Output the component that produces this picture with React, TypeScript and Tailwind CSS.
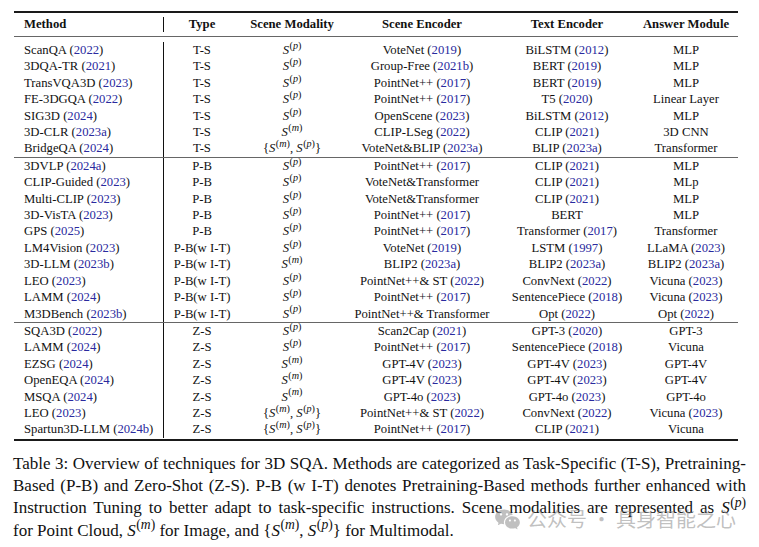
import { RiWechatFill } from 'react-icons/ri';

type Mod = 'p' | 'm' | 'mp';
type Row = [string, string, Mod, string, string, string];

const sections: Row[][] = [
  [
    ['ScanQA (2022)', 'T-S', 'p', 'VoteNet (2019)', 'BiLSTM (2012)', 'MLP'],
    ['3DQA-TR (2021)', 'T-S', 'p', 'Group-Free (2021b)', 'BERT (2019)', 'MLP'],
    ['TransVQA3D (2023)', 'T-S', 'p', 'PointNet++ (2017)', 'BERT (2019)', 'MLP'],
    ['FE-3DGQA (2022)', 'T-S', 'p', 'PointNet++ (2017)', 'T5 (2020)', 'Linear Layer'],
    ['SIG3D (2024)', 'T-S', 'p', 'OpenScene (2023)', 'BiLSTM (2012)', 'MLP'],
    ['3D-CLR (2023a)', 'T-S', 'm', 'CLIP-LSeg (2022)', 'CLIP (2021)', '3D CNN'],
    ['BridgeQA (2024)', 'T-S', 'mp', 'VoteNet&BLIP (2023a)', 'BLIP (2023a)', 'Transformer'],
  ],
  [
    ['3DVLP (2024a)', 'P-B', 'p', 'PointNet++ (2017)', 'CLIP (2021)', 'MLP'],
    ['CLIP-Guided (2023)', 'P-B', 'p', 'VoteNet&Transformer', 'CLIP (2021)', 'MLp'],
    ['Multi-CLIP (2023)', 'P-B', 'p', 'VoteNet&Transformer', 'CLIP (2021)', 'MLP'],
    ['3D-VisTA (2023)', 'P-B', 'p', 'PointNet++ (2017)', 'BERT', 'MLP'],
    ['GPS (2025)', 'P-B', 'p', 'PointNet++ (2017)', 'Transformer (2017)', 'Transformer'],
    ['LM4Vision (2023)', 'P-B(w I-T)', 'p', 'VoteNet (2019)', 'LSTM (1997)', 'LLaMA (2023)'],
    ['3D-LLM (2023b)', 'P-B(w I-T)', 'm', 'BLIP2 (2023a)', 'BLIP2 (2023a)', 'BLIP2 (2023a)'],
    ['LEO (2023)', 'P-B(w I-T)', 'p', 'PointNet++& ST (2022)', 'ConvNext (2022)', 'Vicuna (2023)'],
    ['LAMM (2024)', 'P-B(w I-T)', 'p', 'PointNet++ (2017)', 'SentencePiece (2018)', 'Vicuna (2023)'],
    ['M3DBench (2023b)', 'P-B(w I-T)', 'p', 'PointNet++& Transformer', 'Opt (2022)', 'Opt (2022)'],
  ],
  [
    ['SQA3D (2022)', 'Z-S', 'p', 'Scan2Cap (2021)', 'GPT-3 (2020)', 'GPT-3'],
    ['LAMM (2024)', 'Z-S', 'p', 'PointNet++ (2017)', 'SentencePiece (2018)', 'Vicuna'],
    ['EZSG (2024)', 'Z-S', 'm', 'GPT-4V (2023)', 'GPT-4V (2023)', 'GPT-4V'],
    ['OpenEQA (2024)', 'Z-S', 'm', 'GPT-4V (2023)', 'GPT-4V (2023)', 'GPT-4V'],
    ['MSQA (2024)', 'Z-S', 'm', 'GPT-4o (2023)', 'GPT-4o (2023)', 'GPT-4o'],
    ['LEO (2023)', 'Z-S', 'mp', 'PointNet++& ST (2022)', 'ConvNext (2022)', 'Vicuna (2023)'],
    ['Spartun3D-LLM (2024b)', 'Z-S', 'mp', 'PointNet++ (2017)', 'CLIP (2021)', 'Vicuna'],
  ],
];

const grid = 'grid grid-cols-[150px_76px_104px_156px_134px_104px]';

// "Name (2021b)" -> name with the year in citation blue
function Cite({ text }: { text: string }) {
  const m = text.match(/^(.*) \((\d{4}[ab]?)\)$/);
  if (!m) return <>{text}</>;
  return (
    <>
      {m[1]} (<span className="text-[#2a2a9e]">{m[2]}</span>)
    </>
  );
}

function S({ v }: { v: string }) {
  return (
    <span className="whitespace-nowrap">
      <i>S</i>
      <sup className="ml-[0.5px] text-[80%]">
        (<i>{v}</i>)
      </sup>
    </span>
  );
}

function Modality({ m }: { m: Mod }) {
  if (m === 'mp')
    return (
      <span className="whitespace-nowrap">
        {'{'}
        <S v="m" />, <S v="p" />
        {'}'}
      </span>
    );
  return <S v={m} />;
}

function BodyRow({ r }: { r: Row }) {
  return (
    <div className={`${grid} leading-[16.4px]`}>
      <div className="border-r border-[#111] pl-[10px]">
        <Cite text={r[0]} />
      </div>
      <div className="text-center">{r[1]}</div>
      <div className="text-center">
        <Modality m={r[2]} />
      </div>
      <div className="text-center whitespace-nowrap">
        <Cite text={r[3]} />
      </div>
      <div className="text-center whitespace-nowrap">
        <Cite text={r[4]} />
      </div>
      <div className="text-center whitespace-nowrap">
        <Cite text={r[5]} />
      </div>
    </div>
  );
}

export default function App() {
  return (
    <div className="relative h-[547px] w-[759px] overflow-hidden bg-white text-[#111] font-['Liberation_Serif',serif]">
      <div className="ml-[14px] w-[724px] pt-[11px] text-[12.7px]">
        <div className="border-t-2 border-[#1a1a1a]" />
        <div className={`${grid} h-[23px] items-center font-bold`}>
          <div className="flex h-full items-center pl-[10px]">
            <span className="flex-1">Method</span>
            <span className="h-[15px] border-r border-[#111]" />
          </div>
          <div className="text-center">Type</div>
          <div className="text-center">Scene Modality</div>
          <div className="text-center">Scene Encoder</div>
          <div className="text-center">Text Encoder</div>
          <div className="text-center">Answer Module</div>
        </div>
        <div className="h-px bg-[#666]" />
        <div className="pt-[5px]">
          {sections[0].map((r, i) => (
            <BodyRow key={i} r={r} />
          ))}
        </div>
        <div className="h-px bg-[#666]" />
        <div>
          {sections[1].map((r, i) => (
            <BodyRow key={i} r={r} />
          ))}
        </div>
        <div className="h-px bg-[#666]" />
        <div className="pb-[1px]">
          {sections[2].map((r, i) => (
            <BodyRow key={i} r={r} />
          ))}
        </div>
        <div className="border-t-2 border-[#1a1a1a]" />
      </div>

      <div className="mx-[13px] mt-[12px] text-[17px] leading-[22.3px] text-[#111]">
        <div className="whitespace-nowrap text-justify [text-align-last:justify]">
          Table 3: Overview of techniques for 3D SQA. Methods are categorized as Task-Specific (T-S), Pretraining-
        </div>
        <div className="whitespace-nowrap text-justify [text-align-last:justify]">
          Based (P-B) and Zero-Shot (Z-S). P-B (w I-T) denotes Pretraining-Based methods further enhanced with
        </div>
        <div className="whitespace-nowrap text-justify [text-align-last:justify]">
          Instruction Tuning to better adapt to task-specific instructions. Scene modalities are represented as <S v="p" />
        </div>
        <div className="whitespace-nowrap">
          for Point Cloud, <S v="m" /> for Image, and {'{'}
          <S v="m" />, <S v="p" />
          {'}'} for Multimodal.
        </div>
      </div>

      {/* watermark */}
      <div className="absolute left-[494px] top-[505px] flex items-center gap-[6px] whitespace-nowrap text-[rgba(140,140,140,0.55)]">
        <RiWechatFill className="h-[27px] w-[27px]" />
        <span className="text-[20px] leading-[28px] font-['Noto_Sans_CJK_SC',sans-serif]">公众号 · 具身智能之心</span>
      </div>
    </div>
  );
}
